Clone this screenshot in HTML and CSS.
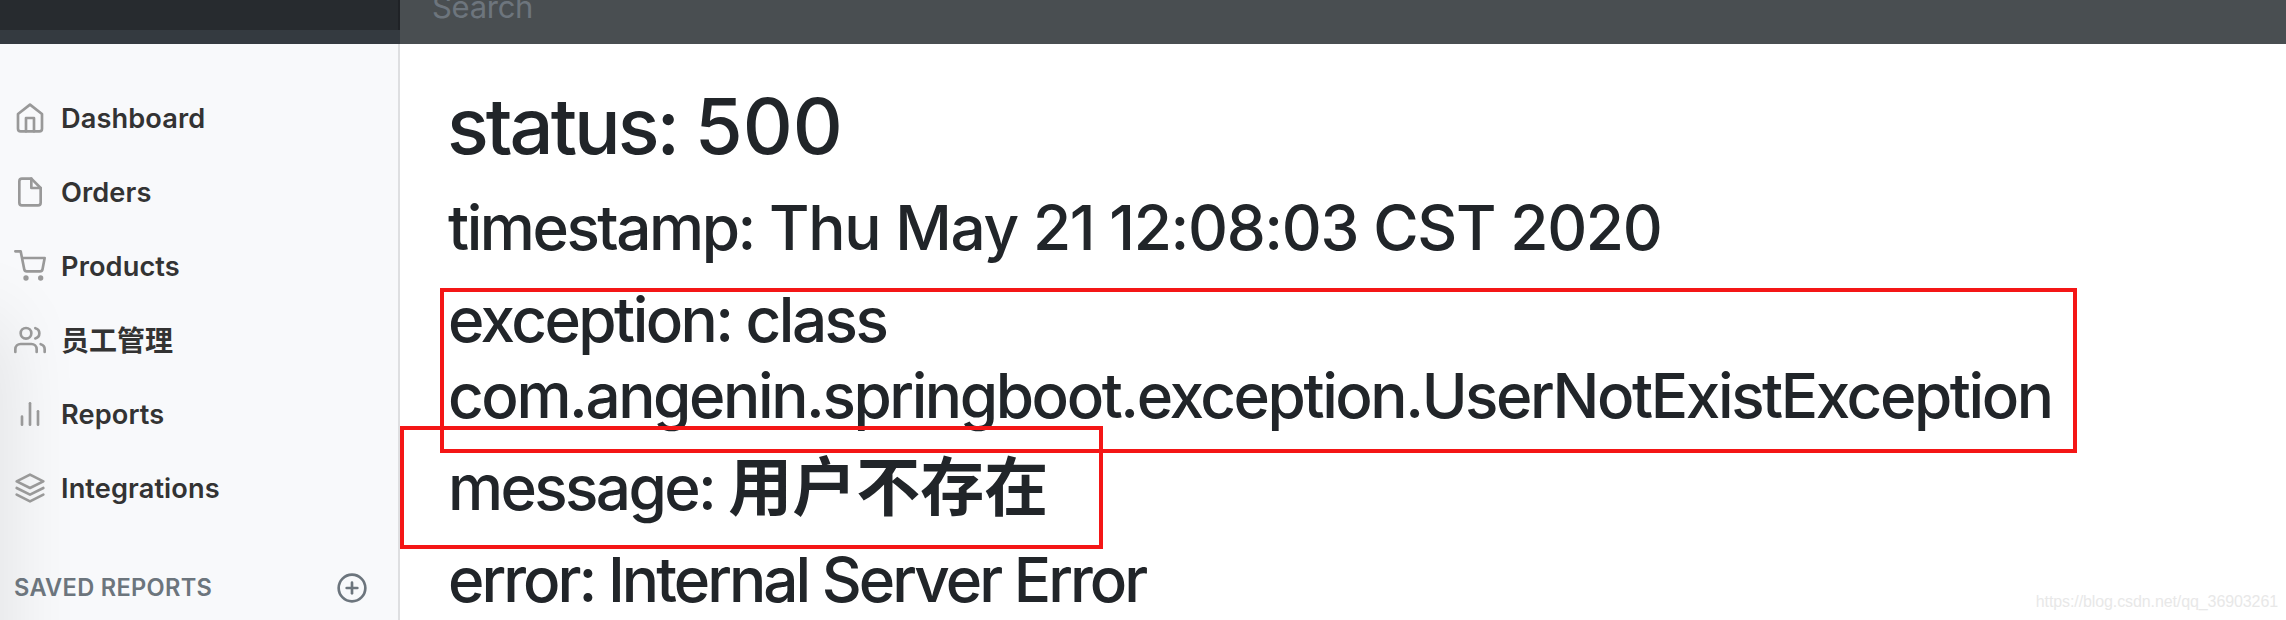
FILE: index.html
```html
<!DOCTYPE html>
<html lang="zh-CN">
<head>
<meta charset="utf-8">
<title>Dashboard</title>
<link rel="stylesheet" href="styles.css">
</head>
<body>
<div class="page">
  <header class="topbar">
    <div class="brand"></div>
    <div class="search"><span class="search-text">Search</span></div>
  </header>
  <div class="layout">
    <nav class="sidebar">
      <div class="edge-shadow"></div>
      <a class="nav-link"><svg class="icon" viewBox="0 0 24 24"><path d="M3 9l9-7 9 7v11a2 2 0 0 1-2 2H5a2 2 0 0 1-2-2z"/><polyline points="9 22 9 12 15 12 15 22"/></svg><span class="label">Dashboard</span></a>
      <a class="nav-link"><svg class="icon" viewBox="0 0 24 24"><path d="M13 2H6a2 2 0 0 0-2 2v16a2 2 0 0 0 2 2h12a2 2 0 0 0 2-2V9z"/><polyline points="13 2 13 9 20 9"/></svg><span class="label">Orders</span></a>
      <a class="nav-link"><svg class="icon" viewBox="0 0 24 24"><circle cx="9" cy="21" r="1"/><circle cx="20" cy="21" r="1"/><path d="M1 1h4l2.68 13.39a2 2 0 0 0 2 1.61h9.72a2 2 0 0 0 2-1.61L23 6H6"/></svg><span class="label">Products</span></a>
      <a class="nav-link"><svg class="icon" viewBox="0 0 24 24"><path d="M17 21v-2a4 4 0 0 0-4-4H5a4 4 0 0 0-4 4v2"/><circle cx="9" cy="7" r="4"/><path d="M23 21v-2a4 4 0 0 0-3-3.87"/><path d="M16 3.13a4 4 0 0 1 0 7.75"/></svg><span class="label label-cjk">员工管理</span></a>
      <a class="nav-link"><svg class="icon" viewBox="0 0 24 24"><line x1="18" y1="20" x2="18" y2="10"/><line x1="12" y1="20" x2="12" y2="4"/><line x1="6" y1="20" x2="6" y2="14"/></svg><span class="label">Reports</span></a>
      <a class="nav-link"><svg class="icon" viewBox="0 0 24 24"><polygon points="12 2 2 7 12 12 22 7 12 2"/><polyline points="2 17 12 22 22 17"/><polyline points="2 12 12 17 22 12"/></svg><span class="label">Integrations</span></a>
      <div class="heading">
        <span class="heading-text">SAVED REPORTS</span>
        <svg class="icon heading-icon" viewBox="0 0 24 24"><circle cx="12" cy="12" r="10"/><line x1="12" y1="8" x2="12" y2="16"/><line x1="8" y1="12" x2="16" y2="12"/></svg>
      </div>
    </nav>
    <main class="main">
      <h1 class="status">status: <span class="code">500</span></h1>
      <h2 class="line timestamp"><span class="key">timestamp:</span> Thu May 21 12:08:03 CST 2020</h2>
      <h2 class="line"><span class="exception">exception: class</span><br><span class="class-name">com.angenin.springboot.exception.UserNotExistException</span></h2>
      <h2 class="line"><span class="message">message: </span><span class="cjk">用户不存在</span></h2>
      <h2 class="line error">error: Internal Server Error</h2>
    </main>
  </div>
  <div class="mark mark-exception"></div>
  <div class="mark mark-message"></div>
  <div class="watermark">https://blog.csdn.net/qq_36903261</div>
</div>
</body>
</html>
```
FILE: styles.css
```css
* { box-sizing: border-box; }
body {
  margin: 0;
  background: #fff;
  font-family: Inter, "Noto Sans CJK SC", sans-serif;
  color: #212529;
}
.page {
  position: relative;
  width: 2286px;
  height: 620px;
  overflow: hidden;
  display: flex;
  flex-direction: column;
}
.topbar { display: flex; flex: none; height: 44px; background: #343a40; }
.brand {
  width: 400px;
  height: 30px;
  background: #272b2f;
  box-shadow: inset -2px 0 0 #1f2226;
}
.search {
  flex: 1;
  height: 44px;
  padding-left: 32px;
  background: #494e51;
  overflow: hidden;
}
.search-text {
  display: block;
  margin-top: -13px;
  font-size: 31px;
  line-height: 39px;
  letter-spacing: -0.3px;
  color: #6d757d;
}
.layout { display: flex; flex: 1; min-height: 0; }
.sidebar {
  position: relative;
  flex: none;
  width: 400px;
  padding-top: 37px;
  background: #f8f9fb;
  border-right: 2px solid #dedfe1;
  overflow: hidden;
}
.edge-shadow {
  position: absolute;
  left: -60px;
  top: 276px;
  width: 60px;
  height: 500px;
  box-shadow: 0 0 80px rgba(0, 0, 0, 0.12);
}
.nav-link {
  position: relative;
  display: flex;
  align-items: center;
  height: 74px;
  padding-left: 14px;
  gap: 15px;
}
.icon {
  flex: none;
  width: 32px;
  height: 32px;
  fill: none;
  stroke: #999;
  stroke-width: 2;
  stroke-linecap: round;
  stroke-linejoin: round;
}
.label {
  padding-top: 1px;
  font-size: 27.2px;
  font-weight: 600;
  line-height: 42px;
  letter-spacing: 0.1px;
  color: #333;
  white-space: nowrap;
}
.label-cjk { padding-top: 2px; font-size: 28px; letter-spacing: 0; }
.heading {
  position: relative;
  display: flex;
  align-items: center;
  justify-content: space-between;
  height: 36px;
  margin-top: 45px;
  padding: 0 30px 0 14px;
}
.heading-text {
  padding-bottom: 2px;
  font-size: 23.6px;
  font-weight: 600;
  letter-spacing: 0.3px;
  color: #6c757d;
}
.heading-icon { stroke: #6c757d; }
.main { flex: 1; padding: 34px 0 0 48px; white-space: nowrap; }
.status {
  margin: 0 0 16px -1px;
  font-size: 77.6px;
  font-weight: 500;
  line-height: 96px;
  letter-spacing: -3px;
}
.code { letter-spacing: 0; }
.line {
  margin: 0 0 16px;
  font-size: 62px;
  font-weight: 500;
  line-height: 76px;
  letter-spacing: -2.6px;
}
.timestamp { letter-spacing: -1.35px; }
.key { letter-spacing: -2.45px; }
.exception { letter-spacing: -2.55px; }
.class-name { letter-spacing: -2.42px; }
.error { letter-spacing: -2.97px; }
.cjk {
  font-family: "Noto Sans CJK SC", sans-serif;
  font-size: 64px;
  font-weight: 700;
  letter-spacing: 0;
  line-height: 1px;
}
.mark { position: absolute; border: 4px solid #f41616; }
.mark-exception { left: 440px; top: 288px; width: 1637px; height: 165px; }
.mark-message { left: 400px; top: 426px; width: 703px; height: 123px; }
.watermark {
  position: absolute;
  right: 8px;
  bottom: 8px;
  font-family: "Liberation Sans", sans-serif;
  font-size: 16px;
  line-height: 20px;
  letter-spacing: -0.1px;
  color: #e8e8e8;
}
```
